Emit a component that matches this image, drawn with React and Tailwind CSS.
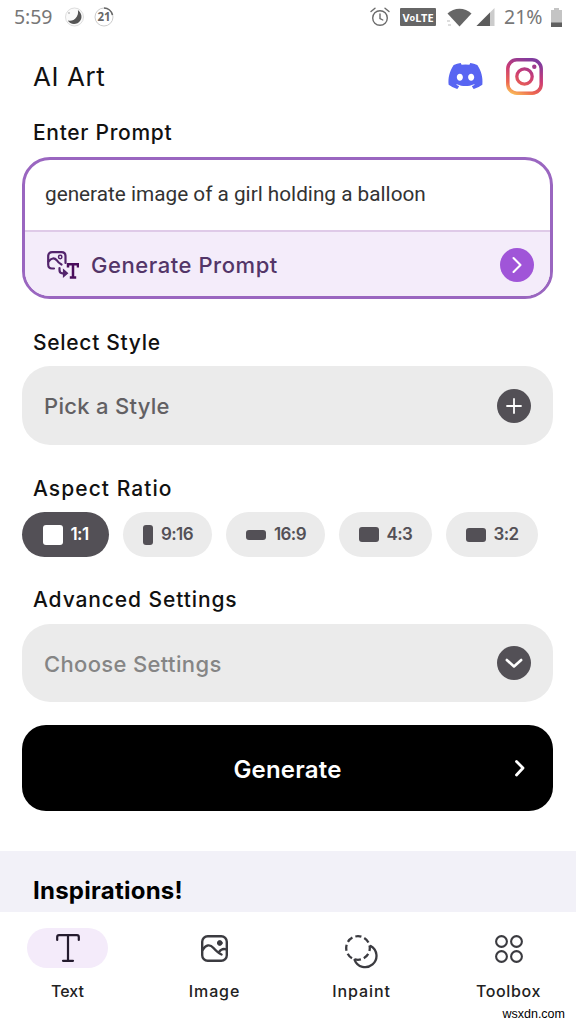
import React from 'react';
import { FaDiscord } from 'react-icons/fa';

// Aspect ratio choices with the size of the little preview shape in each pill.
const RATIOS = [
  { label: '1:1', pill: 'w-[87px] bg-[#535056] text-white', shape: 'h-5 w-5 bg-white', text: 'w-[18px]' },
  { label: '9:16', pill: 'w-[89px] bg-[#ebebeb] text-[#535056]', shape: 'h-5 w-[10px] bg-[#535056]', text: 'w-[31px]' },
  { label: '16:9', pill: 'w-[99px] bg-[#ebebeb] text-[#535056]', shape: 'h-[10px] w-5 bg-[#535056]', text: 'w-[31px]' },
  { label: '4:3', pill: 'w-[93px] bg-[#ebebeb] text-[#535056]', shape: 'h-[15px] w-5 bg-[#535056]', text: 'w-[26px]' },
  { label: '3:2', pill: 'w-[92px] bg-[#ebebeb] text-[#535056]', shape: 'h-[14px] w-5 bg-[#535056]', text: 'w-[25px]' },
];

// --- Status bar ---
const StatusBar = () => (
  <div className="flex h-[34px] items-center justify-between pl-[14px] pr-[14px] font-['Noto_Sans'] text-[#777]">
    <div className="flex items-center">
      <span className="w-[40px] whitespace-nowrap text-[19.5px] leading-none tracking-[-0.1px]">5:59</span>
      <svg className="ml-[11px]" width="19" height="20" viewBox="0 0 19 20">
        <circle cx="9.5" cy="10" r="9" fill="#fafafa" stroke="#ddd" />
        <path d="M12.8 3A7.2 7.2 0 0 1 3 13.8A8.2 8.2 0 0 0 12.8 3Z" fill="#555" />
        <path d="M13 3.2C18 7 17.5 13.5 12.5 16.2C8.5 18 4.5 16.5 3 13.5C9 15 14 9.5 13 3.2Z" fill="#555" />
        <circle cx="4" cy="6" r="0.8" fill="#999" />
      </svg>
      <span className="relative ml-[10px] flex h-5 w-5 items-center justify-center text-[11.5px] font-bold text-[#666]">
        <svg className="absolute inset-0" width="20" height="20" viewBox="0 0 20 20" fill="none">
          <circle cx="10" cy="10" r="9" stroke="#ccc" />
          <path d="M10 1A9 9 0 0 1 18.5 8" stroke="#666" strokeWidth="1.6" />
        </svg>
        21
      </span>
    </div>
    <div className="flex items-center">
      <svg width="20" height="20" viewBox="0 0 20 20" fill="none" stroke="#6b6b6b" strokeWidth="1.4" strokeLinecap="round">
        <circle cx="10" cy="11" r="7.3" />
        <path d="M10 7V11.5L12.8 13M1 4.5L5 1.2M19 4.5L15 1.2" />
      </svg>
      <span className="ml-[10px] flex h-[18px] w-[36px] items-center justify-center rounded-[1px] bg-[#666] text-[11px] font-bold leading-none text-white">
        V<span className="text-[9px]">o</span>LTE
      </span>
      <svg className="ml-[11px]" width="25" height="19" viewBox="0 0 25 19">
        <path d="M0.5 5.5C7-1 18-1 24.5 5.5L12.5 18.5Z" fill="#666" />
        <path d="M0 13h3M1 17h3" stroke="#bbb" />
      </svg>
      <svg className="ml-[4px]" width="19" height="18" viewBox="0 0 19 18">
        <path d="M18.5 0V18H0.5Z" fill="#ccc" />
        <path d="M14 4.5V18H0.5Z" fill="#5c5c5c" />
      </svg>
      <span className="ml-[9px] w-[41px] whitespace-nowrap text-[19.5px] leading-none">21%</span>
      <svg className="ml-[6px]" width="11" height="19" viewBox="0 0 11 19">
        <path d="M3 0H8V2H11V15H0V2H3Z" fill="#c4c4c4" />
        <path d="M0 14.5H11V19H0Z" fill="#5f5f5f" />
      </svg>
    </div>
  </div>
);

const InstagramLogo = () => (
  <svg width="37" height="37" viewBox="0 0 37 37" fill="none">
    <defs>
      <linearGradient id="insta" x1="6" y1="37" x2="22" y2="0" gradientUnits="userSpaceOnUse">
        <stop offset="0" stopColor="#fcc65a" />
        <stop offset="0.25" stopColor="#ec6650" />
        <stop offset="0.6" stopColor="#cb3b75" />
        <stop offset="1" stopColor="#803b9e" />
      </linearGradient>
    </defs>
    <rect x="1.8" y="1.8" width="33.4" height="33.4" rx="9" stroke="url(#insta)" strokeWidth="3.5" />
    <circle cx="18.5" cy="18.5" r="7.7" stroke="url(#insta)" strokeWidth="3.3" />
    <circle cx="28.3" cy="8.8" r="2.2" fill="#a03a8c" />
  </svg>
);

const PromptIcon = () => (
  <svg width="32" height="28" viewBox="0 0 32 28" fill="none" stroke="#53246c" strokeWidth="2.2" strokeLinecap="round">
    <path d="M7 17.5H5Q1.2 17.5 1.2 13.5V5.2Q1.2 1.2 5.2 1.2H14.5Q18.5 1.2 18.5 5.2V12" />
    <path d="M1.5 10.5Q6 5 10 9.5Q11.5 12 14.5 13.5" />
    <circle cx="13.2" cy="6" r="1.7" strokeWidth="1.5" />
    <path d="M12.5 17V19Q12.5 22.3 15.5 22.3H18" />
    <path d="M16.5 18.8L20.5 22.3L16.5 25.8Z" fill="#53246c" strokeWidth="1.2" />
    <path d="M21 16.5V13.2H31V16.5M26 13V26.5M22.8 26.6H29.2" stroke="#4a0d5c" strokeWidth="2.5" strokeLinecap="butt" />
  </svg>
);

// --- Bottom navigation icons ---
const TextIcon = () => (
  <svg width="24" height="28" viewBox="0 0 24 28" fill="none" stroke="#241b2e" strokeWidth="2.2" strokeLinecap="round" strokeLinejoin="round">
    <path d="M1.2 6V3Q1.2 1.2 3 1.2H21Q22.8 1.2 22.8 3V6M12 1.2V26.8M7 26.8H17" />
  </svg>
);

const ImageIcon = () => (
  <svg width="27" height="27" viewBox="0 0 27 27" fill="none" stroke="#3b3b40" strokeWidth="2.4" strokeLinecap="round">
    <rect x="1.2" y="1.2" width="24.6" height="24.6" rx="5.5" />
    <path d="M1.5 15C5 9.5 9 9 12.5 13Q17 18 20.5 19.5" />
    <path d="M18 17Q21 12.8 25.5 14.5" />
    <circle cx="18.8" cy="8" r="2.4" fill="#3b3b40" strokeWidth="1" />
  </svg>
);

const InpaintIcon = () => (
  <svg width="34" height="34" viewBox="0 0 34 34" fill="none" stroke="#3b3b40" strokeWidth="2.3">
    <circle cx="13" cy="13" r="11.8" strokeDasharray="6.2 3.07" strokeDashoffset="3.1" />
    <path d="M25.7 11A11.3 11.3 0 1 1 9.6 24.8" strokeLinecap="round" />
  </svg>
);

const ToolboxIcon = () => (
  <svg width="28" height="28" viewBox="0 0 28 28" fill="none" stroke="#3b3b40" strokeWidth="2.1">
    <circle cx="6.5" cy="6.5" r="5.4" />
    <circle cx="21.5" cy="6.5" r="5.4" />
    <circle cx="6.5" cy="21.5" r="5.4" />
    <circle cx="21.5" cy="21.5" r="5.4" />
  </svg>
);

const TABS = [
  { label: 'Text', Icon: TextIcon, active: true },
  { label: 'Image', Icon: ImageIcon, text: 'tracking-[0.9px]' },
  { label: 'Inpaint', Icon: InpaintIcon, shift: 'pt-[7px]', text: 'tracking-[0.9px]' },
  { label: 'Toolbox', Icon: ToolboxIcon, shift: 'pt-[2px]', text: 'tracking-[0.6px]' },
];

const SectionLabel = ({ children, tracking = 'tracking-[0.7px]' }) => (
  <h2 className={`ml-[11px] h-7 pt-px text-[21px] font-medium leading-7 text-[#111] ${tracking}`}>{children}</h2>
);

const RoundIcon = ({ color, path, width = '2.2' }) => (
  <span className={`flex h-[34px] w-[34px] items-center justify-center rounded-full ${color}`}>
    <svg width="34" height="34" viewBox="0 0 34 34" fill="none" stroke="#fff" strokeWidth={width} strokeLinecap="round" strokeLinejoin="round">
      <path d={path} />
    </svg>
  </span>
);

const App = () => (
  <div className="relative flex h-[1024px] w-[576px] flex-col overflow-hidden bg-white font-['Inter',sans-serif]">
    <StatusBar />

    <header className="flex h-[84px] items-center justify-between pl-[33px] pr-[33px]">
      <h1 className="pt-px text-[26px] leading-none tracking-[0.6px] text-[#111]">AI Art</h1>
      <div className="flex items-center gap-[22px]">
        <FaDiscord className="h-[30px] w-[37px] text-[#5865f2]" preserveAspectRatio="none" />
        <InstagramLogo />
      </div>
    </header>

    <main className="flex flex-col px-[22px]">
      <SectionLabel>Enter Prompt</SectionLabel>
      <div className="mt-[11px] flex h-[142px] w-[531px] flex-col overflow-hidden rounded-[28px] border-[3px] border-[#9a66c0]">
        <p className="flex h-[70px] items-center pl-[20px] font-['Roboto'] text-[20.75px] text-[#333]">
          generate image of a girl holding a balloon
        </p>
        <div className="flex flex-1 items-center justify-between border-t-2 border-[#dfcae8] bg-[#f4ecfa] pl-[22px] pr-[16px] pt-[2px]">
          <div className="flex items-center gap-[12px]">
            <PromptIcon />
            <span className="pt-px text-[22px] font-medium tracking-[0.55px] text-[#533568]">Generate Prompt</span>
          </div>
          <RoundIcon color="bg-[#a055d8]" path="M13.5 10L20.5 17L13.5 24" width="2.1" />
        </div>
      </div>

      <div className="mt-[29px]">
        <SectionLabel>Select Style</SectionLabel>
        <button className="mt-[10px] flex h-[79px] w-[531px] items-center justify-between rounded-[28px] bg-[#ebebeb] pl-[22px] pr-[22px]">
          <span className="pt-[2px] text-[22px] font-medium tracking-[0.3px] text-[#626063]">Pick a Style</span>
          <RoundIcon color="bg-[#535056]" path="M17 10V24M10 17H24" width="1.8" />
        </button>
      </div>

      <div className="mt-[29px]">
        <SectionLabel tracking="tracking-[1.05px]">Aspect Ratio</SectionLabel>
        <div className="mt-[10px] flex gap-[14px]">
          {RATIOS.map(({ label, pill, shape, text }) => (
            <button key={label} className={`flex h-[45px] shrink-0 items-center justify-center gap-[8px] rounded-full ${pill}`}>
              <span className={`rounded-[3px] ${shape}`} />
              <span className={`whitespace-nowrap pt-px text-left text-[17px] font-semibold tracking-[-0.6px] ${text}`}>{label}</span>
            </button>
          ))}
        </div>
      </div>

      <div className="mt-[28px]">
        <SectionLabel tracking="tracking-[0.9px]">Advanced Settings</SectionLabel>
        <button className="mt-[11px] flex h-[78px] w-[531px] items-center justify-between rounded-[28px] bg-[#ebebeb] pl-[22px] pr-[22px]">
          <span className="pt-[2px] text-[22px] font-medium tracking-[0.35px] text-[#858585]">Choose Settings</span>
          <RoundIcon color="bg-[#535056]" path="M9.8 14L17 20.5L24.2 14" width="2.6" />
        </button>
      </div>

      <button className="mt-[23px] grid h-[86px] w-[531px] grid-cols-[34px_1fr_34px] items-center rounded-[24px] bg-black px-[17px]">
        <span />
        <span className="pt-[3px] text-[24px] font-semibold tracking-[0.2px] text-white">Generate</span>
        <RoundIcon color="" path="M14.5 10.5L21 17L14.5 24" width="2.8" />
      </button>
    </main>

    <section className="mt-[40px] h-[61px] shrink-0 bg-[#f2f1f8] pl-[33px] pt-[24px]">
      <h2 className="text-[24px] font-bold leading-8 tracking-[0.25px] text-black">Inspirations!</h2>
    </section>

    {/* Bottom navigation */}
    <nav className="-mx-[6px] flex flex-1 bg-white pt-4">
      {TABS.map(({ label, Icon, active, shift = '', text = '' }) => (
        <div key={label} className="flex w-[147px] flex-col items-center">
          <span className={`flex h-10 w-[81px] items-center justify-center rounded-full ${active ? 'bg-[#f4ebfa]' : ''} ${shift}`}>
            <Icon />
          </span>
          <span className={`mt-[11px] text-[16px] font-medium leading-6 text-[#222] ${text}`}>{label}</span>
        </div>
      ))}
    </nav>

    <span className="absolute bottom-[2px] right-[11px] font-['Liberation_Sans'] text-[12.5px] leading-4 text-black">wsxdn.com</span>
  </div>
);

export default App;
